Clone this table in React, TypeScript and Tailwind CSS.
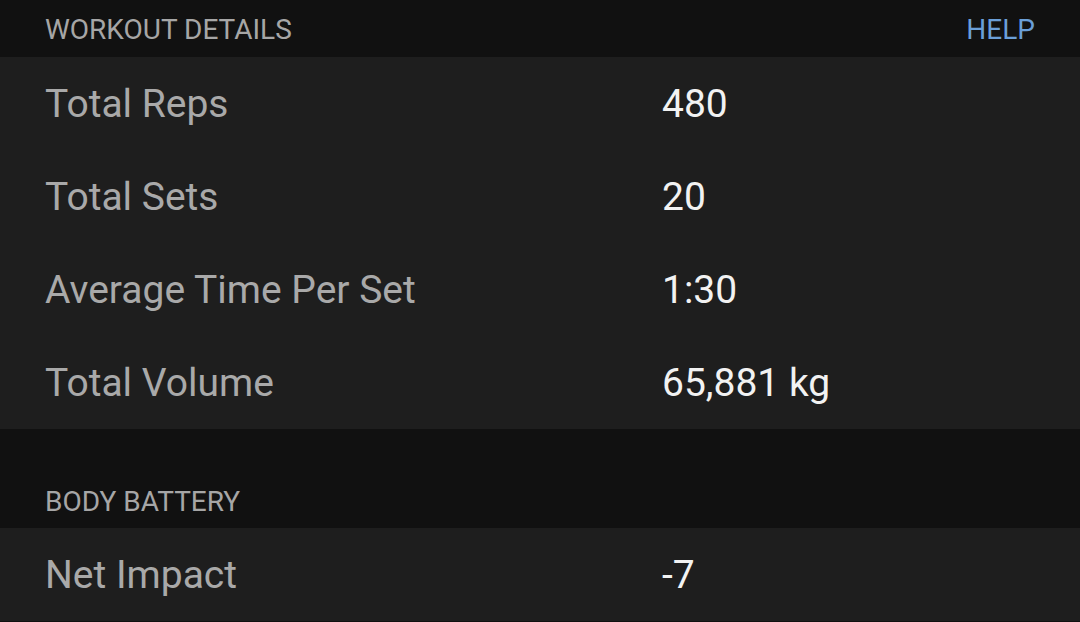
const workoutRows = [
  { label: 'Total Reps', value: '480' },
  { label: 'Total Sets', value: '20' },
  { label: 'Average Time Per Set', value: '1:30' },
  { label: 'Total Volume', value: '65,881 kg' },
];

function Row({ label, value }: { label: string; value: string }) {
  return (
    <div className="flex h-[93px] items-center px-[45px] pt-[2px]">
      <span className="w-[617px] text-[39px] text-[#a9a9a9]">{label}</span>
      <span className="text-[39px] text-[#f2f2f2]">{value}</span>
    </div>
  );
}

export default function App() {
  return (
    <div className="h-[622px] w-[1080px] overflow-hidden bg-[#111111] font-['Roboto',sans-serif]">
      <div className="flex h-[57px] items-center justify-between px-[45px] pt-[3px]">
        <span className="text-[28px] text-[#a6a6a6]">WORKOUT DETAILS</span>
        <span className="text-[28px] text-[#6a9fd8]">HELP</span>
      </div>
      <div className="bg-[#1e1e1e]">
        {workoutRows.map((row) => (
          <Row key={row.label} {...row} />
        ))}
      </div>
      <div className="flex h-[99px] items-end px-[45px] pb-[5px]">
        <span className="text-[28px] text-[#a6a6a6]">BODY BATTERY</span>
      </div>
      <div className="bg-[#1e1e1e]">
        <Row label="Net Impact" value="-7" />
      </div>
    </div>
  );
}
